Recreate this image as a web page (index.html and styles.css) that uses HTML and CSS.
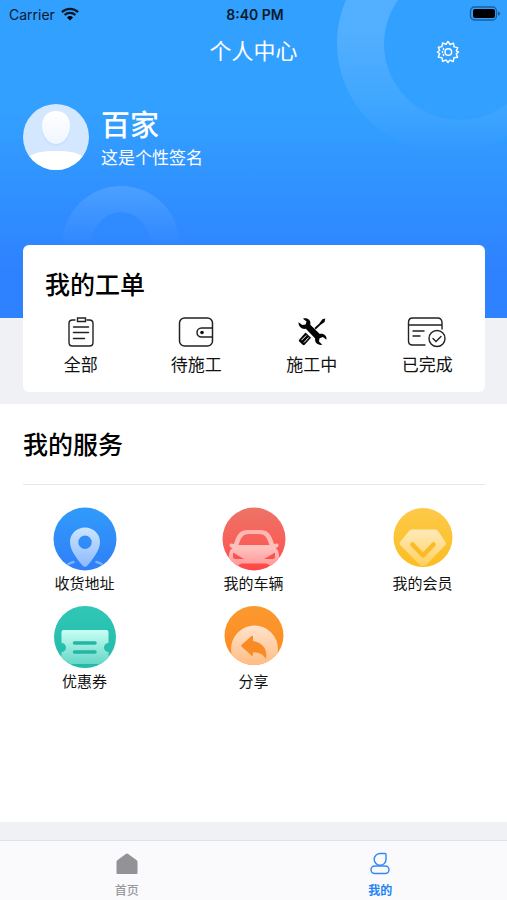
FILE: index.html
```html
<!DOCTYPE html>
<html lang="zh-CN">
<head>
<meta charset="utf-8">
<meta name="viewport" content="width=device-width, initial-scale=1">
<title>个人中心</title>
<link rel="stylesheet" href="styles.css">
</head>
<body>
<div class="page">
  <header class="hero">
    <svg class="ring ring-large" width="170" height="154" viewBox="0 0 170 154" aria-hidden="true">
      <defs><linearGradient id="ringLarge" x1="0" y1="0" x2="0" y2="154" gradientUnits="userSpaceOnUse"><stop offset="0.2" stop-color="#fff" stop-opacity=".16"/><stop offset="1" stop-color="#fff" stop-opacity="0"/></linearGradient></defs>
      <path fill="url(#ringLarge)" fill-rule="evenodd" d="M0 43a110 110 0 0 1 220 0a110 110 0 0 1-220 0ZM47 44a76 76 0 0 0 152 0a76 76 0 0 0-152 0Z"/>
    </svg>
    <svg class="ring ring-small" width="120" height="60" viewBox="0 0 120 60" aria-hidden="true">
      <defs><linearGradient id="ringSmall" x1="0" y1="0" x2="0" y2="1"><stop offset="0" stop-color="#fff" stop-opacity=".13"/><stop offset="1" stop-color="#fff" stop-opacity="0"/></linearGradient></defs>
      <path fill="url(#ringSmall)" d="M1 60a59 60 0 0 1 118 0H90a30 34 0 0 0-60 0Z"/>
    </svg>
    <div class="status">
      <span class="carrier">Carrier
        <svg width="18" height="14" viewBox="0 0 18 14" aria-hidden="true"><path d="M9 13.6 6 10.5a4.3 4.3 0 0 1 6 0Z"/><path fill="none" stroke="#0a1a2c" stroke-width="2.3" d="M3.6 8a7.8 7.8 0 0 1 10.8 0M.9 5.1a11.7 11.7 0 0 1 16.2 0"/></svg>
      </span>
      <span class="clock">8:40 PM</span>
      <svg class="battery" width="32" height="16" viewBox="0 0 32 16" aria-hidden="true"><rect x="1.5" y="1" width="26" height="13" rx="4" fill="none" stroke="#1c5f99" stroke-width="1.3"/><rect x="4" y="3" width="22" height="9" rx="2"/><path fill="#1c5f99" d="M29 5.4q2.2.5 2.2 2.2T29 9.8Z"/></svg>
    </div>
    <div class="titlebar">
      <h1>个人中心</h1>
      <button class="settings" type="button" aria-label="设置">
        <svg width="24" height="24" viewBox="0 0 24 24" fill="none" stroke="#fff" stroke-width="1.4" stroke-linejoin="round"><path d="m12 1.5 2.1 3 3.4-1.3.6 3.7 3.6.7-1.4 3.4 2.2 1-2.2 1.9 1.3 3.3-3.7.6-.7 3.7-3.4-1.4-1.8 2.4-2-2.5-3.4 1.4-.6-3.6-3.7-.7 1.4-3.3L1.500 12l2.200-1.500-1.400-3.200 3.700-.7.6-3.600 3.400 1.400Z"/><circle cx="12.300" cy="12" r="3.300"/><path d="M7.500 8.500v1M6.500 11.500v1M7.500 14.500v1" stroke-linecap="round"/></svg>
      </button>
    </div>
    <div class="profile">
      <svg class="avatar" width="66" height="66" viewBox="0 0 66 66" role="img" aria-label="头像">
        <defs><clipPath id="avatarClip"><circle cx="33" cy="33" r="33"/></clipPath><linearGradient id="head" x1="0" y1="0" x2="0" y2="1"><stop offset="0" stop-color="#fff"/><stop offset="1" stop-color="#f0f6ff"/></linearGradient></defs>
        <g clip-path="url(#avatarClip)"><path fill="#d3e7fe" d="M0 0h66v66H0z"/><path fill="#c9e1fc" d="M19 25c0 10 6 17 14 17s14-7 14-17Z"/><path fill="url(#head)" d="M33 7c8.500 0 14 6 14 14.500C47 31 41 40 33 40S19 31 19 21.500C19 13 24.500 7 33 7Z"/><path fill="#fff" d="M5 53c7-4.500 14-6 28-6s21 1.500 28 6v13H5Z"/></g>
      </svg>
      <div>
        <h2 class="name">百家</h2>
        <p class="signature">这是个性签名</p>
      </div>
    </div>
  </header>

  <main class="content">
    <section class="orders">
      <h2 class="heading">我的工单</h2>
      <nav class="order-list">
        <a href="#all">
          <svg width="40" height="32" viewBox="0 0 40 32" fill="none" stroke="#222" stroke-width="1.4" stroke-linecap="round"><path d="M14 4h-2.500Q8 4 8 7.500v19Q8 30 11.500 30h17q3.500 0 3.500-3.500v-19Q32 4 28.500 4H26"/><path d="M16.500 2h8v3.500h-8ZM12.500 11h15M12.500 16.500h15M12.500 22.500h11"/></svg>
          全部</a>
        <a href="#pending">
          <svg width="40" height="32" viewBox="0 0 40 32" fill="none" stroke="#222" stroke-width="1.500"><rect x="3.500" y="2" width="33" height="28" rx="5"/><path d="M36.500 12h-11a4.500 4.500 0 0 0 0 9h11"/><circle cx="26" cy="16.500" r="1.800" fill="#111" stroke="none"/></svg>
          待施工</a>
        <a href="#working">
          <svg width="40" height="32" viewBox="0 0 40 32" fill="#050505"><path d="M11 2.700c4-1.500 8.500 1.500 7.300 6l9.500 9.300c4-.8 7.300 1.800 6.600 5.800L31 21l-3.500 1.200-.5 3.300 3.300 3.300c-4.500.8-8-2.200-7.100-6.200l-9.400-9.800c-4 .8-7.500-2.300-7.300-6.600l3.900 2.900 3.200-.7.900-3Z"/><path d="m33.300 2.400-2.900.8-3.300 4.600-4.700 4.200 1.300 1.400 4.700-4.300 4.200-3Z"/><path d="m13.500 16.500 5.500 5.300-6.300 7q-1 .8-2 0l-3.500-3.400q-.8-1 .1-1.900Z"/><path fill="none" stroke="#fff" stroke-width="1" d="m9.500 24.200 4.800-4.800M12 26.500l4.600-5"/></svg>
          施工中</a>
        <a href="#done">
          <svg width="40" height="32" viewBox="0 0 40 32" fill="none" stroke="#222" stroke-width="1.400" stroke-linecap="round"><path d="M35 13V6.500Q35 2 30.500 2h-25Q1.500 2 1.500 6.500v18.500q0 4 4 4H18M1.500 9H35M6 15h11M6 20h7"/><circle cx="30" cy="22.500" r="8"/><path d="m26 22.500 3 3 5-5"/></svg>
          已完成</a>
      </nav>
    </section>

    <section class="services">
      <h2 class="heading services-title">我的服务</h2>
      <nav class="service-list">
        <a href="#address">
          <svg width="64" height="64" viewBox="0 0 64 64"><defs><linearGradient id="blue" x1="0" y1="0" x2="0" y2="1"><stop stop-color="#309bfa"/><stop offset="1" stop-color="#307ff8"/></linearGradient><linearGradient id="pin" x1="0" y1="0" x2="0" y2="1"><stop stop-color="#cce5ff"/><stop offset="1" stop-color="#8dbafc"/></linearGradient></defs><circle cx="32" cy="32" r="31.500" fill="url(#blue)"/><path fill="url(#pin)" fill-rule="evenodd" d="M32 20.500c8.500 0 15 6.500 15 14.500 0 8-7 17-12.500 23.500q-2.500 2.500-5 0C24 52 17 43 17 35c0-8 6.500-14.500 15-14.500ZM32 28.500a6.700 6.700 0 1 0 0 13.400 6.700 6.700 0 0 0 0-13.400Z"/><path fill="none" stroke="#78b4fd" stroke-width="2.500" stroke-linecap="round" d="M15.500 57q2-1.200 5-2M48.500 57q-2-1.200-5-2"/></svg>
          收货地址</a>
        <a href="#cars">
          <svg width="64" height="64" viewBox="0 0 64 64"><defs><clipPath id="carClip"><circle cx="32" cy="32" r="31.500"/></clipPath><linearGradient id="red" x1="0" y1="0" x2="0" y2="1"><stop stop-color="#ed7467"/><stop offset=".6" stop-color="#f85e57"/><stop offset="1" stop-color="#ff4547"/></linearGradient><linearGradient id="car" x1="0" y1="0" x2="0" y2="1"><stop stop-color="#ffb3ad"/><stop offset=".5" stop-color="#ffc2bf"/><stop offset="1" stop-color="#ff9797"/></linearGradient></defs><g clip-path="url(#carClip)"><path fill="url(#red)" d="M0 0h64v64H0z"/><path fill="url(#car)" fill-rule="evenodd" d="M12 37C15 27 18 23 26 23h12c8 0 11 4 14 14l3-.5c2 0 2 3.500 0 4l-1.500.5c3 2 3.500 5 3.500 9v9h-9q-1.500-2.500-4-2.500H20q-2.500 0-4 2.500H7v-9c0-4 .5-7 3.500-9L9 40.500c-2-.5-2-4 0-4ZM16.500 38h31c-2.500-8-5-11-10.500-11H27c-5.500 0-8 3-10.500 11ZM11 45.500v4q0 2.500 2.500 2.500H22ZM53 45.500 42 52h8.500q2.500 0 2.500-2.500Z"/></g></svg>
          我的车辆</a>
        <a href="#member">
          <svg width="64" height="64" viewBox="0 0 64 64"><defs><linearGradient id="yellow" x1="0" y1="0" x2="0" y2="1"><stop stop-color="#fdca49"/><stop offset="1" stop-color="#fcbd22"/></linearGradient><linearGradient id="gem" x1="0" y1="0" x2="0" y2="1"><stop stop-color="#ffeabb"/><stop offset="1" stop-color="#fed05c"/></linearGradient></defs><circle cx="32" cy="30.500" r="29.500" fill="url(#yellow)"/><path fill="url(#gem)" d="M21 22.500h23q2 0 3 1.500l7.500 11q1 1.500 0 3L36 57q-4 4-8 0L9 38q-1-1.500 0-3l9-11Q19 22.500 21 22.500Z"/><path fill="none" stroke="#fcba26" stroke-width="4.500" stroke-linecap="round" stroke-linejoin="round" d="m21.500 37.500 10.500 11 10.500-11"/></svg>
          我的会员</a>
        <a href="#coupons">
          <svg width="64" height="64" viewBox="0 0 64 64"><defs><clipPath id="ticketClip"><circle cx="32" cy="32" r="31"/></clipPath><linearGradient id="green" x1="0" y1="0" x2="0" y2="1"><stop stop-color="#30c7b7"/><stop offset="1" stop-color="#22b9a6"/></linearGradient><linearGradient id="ticket" x1="0" y1="0" x2="0" y2="1"><stop stop-color="#c9fff4"/><stop offset="1" stop-color="#65d7c7"/></linearGradient></defs><g clip-path="url(#ticketClip)"><path fill="url(#green)" d="M0 0h64v64H0z"/><path fill="url(#ticket)" d="M10.500 25h43q2 0 2 2v11a4.500 4.500 0 0 0 0 9v12h-47V47a4.500 4.500 0 0 0 0-9V27q0-2 2-2Z"/><path stroke="#25b5a4" stroke-width="3.500" stroke-linecap="round" d="M21.500 38H42M21.500 47H42"/></g></svg>
          优惠券</a>
        <a href="#share">
          <svg width="64" height="64" viewBox="0 0 64 64"><defs><clipPath id="shareClip"><circle cx="32" cy="30.500" r="29.500"/></clipPath><linearGradient id="orange" x1="0" y1="0" x2="0" y2="1"><stop stop-color="#fa9a30"/><stop offset="1" stop-color="#ff861d"/></linearGradient><linearGradient id="disc" x1="0" y1="0" x2="0" y2="1"><stop stop-color="#ffe3cc"/><stop offset="1" stop-color="#ffb576"/></linearGradient></defs><g clip-path="url(#shareClip)"><path fill="url(#orange)" d="M0 0h64v64H0z"/><circle cx="32.500" cy="44" r="23.500" fill="url(#disc)"/><path fill="#f98b24" d="M20 39.500 29.500 31q1.500-1 1.500 1v4c9 1 15 8 13 18-3-5-7-7-13-6.500v2q0 2-1.500 1L20 42q-1.500-1.300 0-2.500Z"/></g></svg>
          分享</a>
      </nav>
    </section>
  </main>

  <nav class="tabbar">
    <a href="#home"><svg width="24" height="24" viewBox="0 0 24 24"><path fill="#929297" d="M12 1.500q.6 0 1.200.5l8.500 6.200q.8.500.8 1.500V21q0 1-1 1h-19q-1 0-1-1V9.700q0-1 .8-1.500L10.800 2q.6-.5 1.200-.5Z"/></svg>首页</a>
    <a class="active" href="#me" aria-current="page"><svg width="24" height="24" viewBox="0 0 24 24" fill="none" stroke="#3088f5" stroke-width="1.400"><path d="M12.500 1.500H17q1 0 1 1V7a5.900 5.900 0 1 1-5.500-5.500Z"/><rect x="3" y="14" width="18" height="7.500" rx="3.700"/></svg>我的</a>
  </nav>
</div>
</body>
</html>
```

FILE: styles.css
```css
* {
  box-sizing: border-box;
}

body {
  margin: 0;
  font-family: Inter, "Noto Sans CJK SC", sans-serif;
  color: #111;
  background: #f0f1f5;
}

h1, h2, p {
  margin: 0;
}

a {
  color: inherit;
  text-decoration: none;
}

svg {
  display: block;
}

.page {
  display: flex;
  flex-direction: column;
  min-height: 100vh;
}

.hero {
  position: relative;
  padding-bottom: 148px;
  background: linear-gradient(#32a0ff 35%, #2e82ff 85%);
  color: #fff;
}

.ring {
  position: absolute;
}

.ring-large {
  top: 0;
  right: 0;
}

.ring-small {
  top: 186px;
  left: 61px;
}

.status {
  display: grid;
  grid-template-columns: 1fr auto 1fr;
  align-items: center;
  height: 28px;
  padding: 0 6px 0 9px;
  font-size: 14px;
  color: #0a1a2c;
}

.carrier {
  display: flex;
  align-items: center;
  gap: 6px;
}

.clock {
  font-weight: 600;
}

.battery {
  justify-self: end;
}

.titlebar {
  display: grid;
  grid-template-columns: 1fr auto 1fr;
  align-items: center;
  height: 48px;
  padding-right: 47px;
  padding-left: 47px;
}

.titlebar h1 {
  grid-column: 2;
  padding-bottom: 2px;
  font-size: 22px;
  line-height: 32px;
  font-weight: 400;
}

.settings {
  justify-self: end;
  padding: 0;
  border: 0;
  background: none;
}

.profile {
  display: flex;
  align-items: center;
  gap: 12px;
  padding: 28px 23px 0;
}

.name {
  padding-top: 2px;
  font-size: 29px;
  line-height: 40px;
  font-weight: 500;
}

.signature {
  font-size: 17px;
  line-height: 24px;
}

.content {
  display: flex;
  flex: 1;
  flex-direction: column;
  gap: 12px;
}

.orders {
  position: relative;
  margin: -73px 22px 0 23px;
  padding: 21px 0 14px;
  border-radius: 6px;
  background: #fff;
}

.heading {
  padding: 0 22px;
  font-size: 25px;
  line-height: 38px;
  font-weight: 500;
  color: #000;
}

.order-list {
  display: grid;
  grid-template-columns: repeat(4, 1fr);
  margin-top: 12px;
}

.order-list a,
.service-list a,
.tabbar a {
  display: flex;
  flex-direction: column;
  align-items: center;
}

.order-list a {
  gap: 4px;
  font-size: 17px;
  line-height: 26px;
}

.services {
  flex: 1;
  margin-bottom: 18px;
  padding-top: 22px;
  background: #fff;
}

.services-title {
  margin: 0 22px 0 23px;
  padding: 0 0 20px;
  border-bottom: 1px solid #e6e6e8;
}

.service-list {
  display: grid;
  grid-template-columns: repeat(3, 1fr);
  row-gap: 10px;
  padding-top: 22px;
}

.service-list a {
  gap: 2px;
  font-size: 15px;
  line-height: 22px;
}

.tabbar {
  display: grid;
  grid-template-columns: 1fr 1fr;
  height: 60px;
  padding-top: 11px;
  border-top: 1px solid #dfe1e4;
  background: #fafafd;
  font-size: 12px;
  line-height: 18px;
  font-weight: 500;
  color: #98989c;
}

.tabbar a {
  gap: 6px;
}

.tabbar .active {
  color: #2484f5;
  font-weight: 700;
}
```
